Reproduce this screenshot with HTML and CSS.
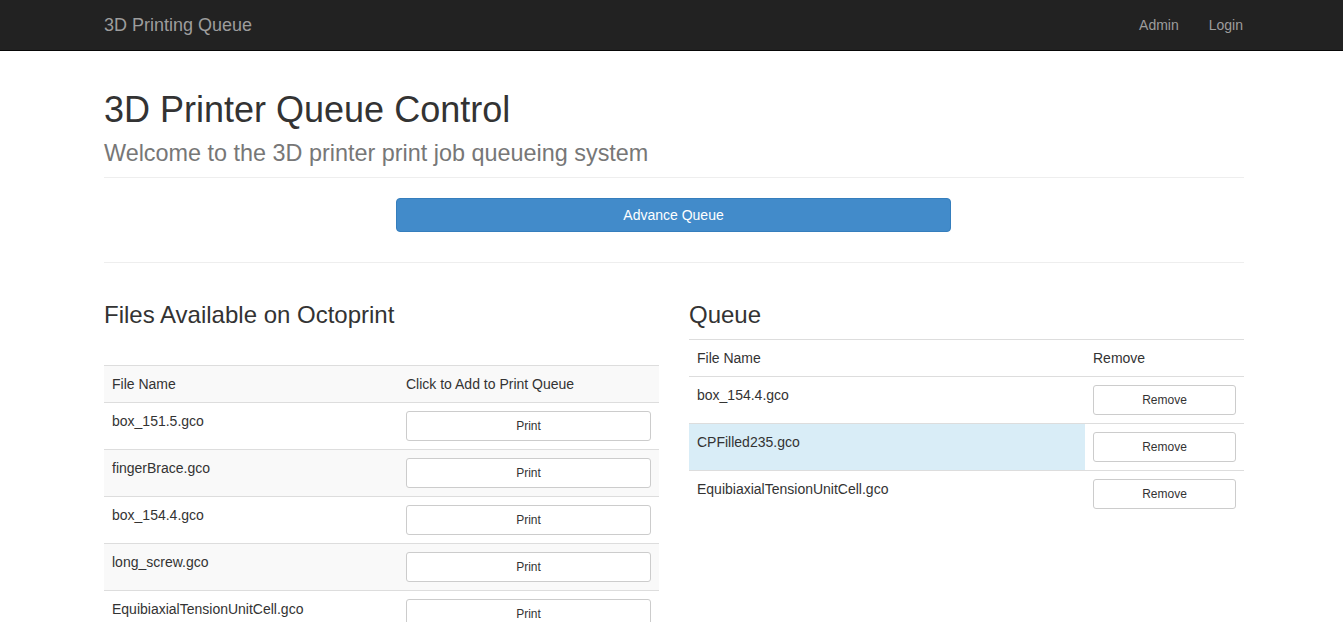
FILE: index.html
```
<!DOCTYPE html>
<html lang="en">
<head>
<meta charset="utf-8">
<title>3D Printing Queue</title>
<link rel="stylesheet" href="styles.css">
</head>
<body>
<nav class="navbar">
  <div class="container nav-inner">
    <a class="brand" href="#">3D Printing Queue</a>
    <ul class="nav-links">
      <li><a href="#">Admin</a></li>
      <li><a href="#">Login</a></li>
    </ul>
  </div>
</nav>
<main class="container">
  <header class="page-header">
    <h1>3D Printer Queue Control<small>Welcome to the 3D printer print job queueing system</small></h1>
  </header>
  <div class="advance-wrap">
    <button class="btn btn-primary">Advance Queue</button>
  </div>
  <hr class="divider">
  <div class="row">
    <section class="col">
      <h3>Files Available on Octoprint</h3>
      <table class="table striped files">
        <tr><td>File Name</td><td class="act">Click to Add to Print Queue</td></tr>
        <tr><td>box_151.5.gco</td><td class="act"><button class="btn btn-sm">Print</button></td></tr>
        <tr><td>fingerBrace.gco</td><td class="act"><button class="btn btn-sm">Print</button></td></tr>
        <tr><td>box_154.4.gco</td><td class="act"><button class="btn btn-sm">Print</button></td></tr>
        <tr><td>long_screw.gco</td><td class="act"><button class="btn btn-sm">Print</button></td></tr>
        <tr><td>EquibiaxialTensionUnitCell.gco</td><td class="act"><button class="btn btn-sm">Print</button></td></tr>
      </table>
    </section>
    <section class="col">
      <h3>Queue</h3>
      <table class="table queue">
        <tr><td>File Name</td><td class="act">Remove</td></tr>
        <tr><td>box_154.4.gco</td><td class="act"><button class="btn btn-sm">Remove</button></td></tr>
        <tr><td class="info">CPFilled235.gco</td><td class="act"><button class="btn btn-sm">Remove</button></td></tr>
        <tr><td>EquibiaxialTensionUnitCell.gco</td><td class="act"><button class="btn btn-sm">Remove</button></td></tr>
      </table>
    </section>
  </div>
</main>
</body>
</html>
```
FILE: styles.css
```
* { box-sizing: border-box; }
html, body { margin: 0; padding: 0; }
body {
  font-family: "Liberation Sans", Arial, Helvetica, sans-serif;
  font-size: 14px;
  line-height: 1.42857;
  color: #333;
  background: #fff;
}
.container {
  width: 1145px;
  padding-left: 5px;
  margin: 0 auto;
}
.navbar {
  background: #222;
  border-bottom: 1px solid #080808;
  height: 51px;
}
.nav-inner {
  display: flex;
  justify-content: space-between;
  align-items: flex-start;
}
.brand {
  display: block;
  font-size: 18px;
  line-height: 20px;
  padding: 15px 0;
  color: #9d9d9d;
  text-decoration: none;
}
.nav-links {
  list-style: none;
  margin: 0 -14px 0 0;
  padding: 0;
  display: flex;
}
.nav-links a {
  display: block;
  padding: 15px;
  line-height: 20px;
  color: #9d9d9d;
  text-decoration: none;
}
.page-header {
  padding-top: 39px;
  padding-bottom: 4px;
  border-bottom: 1px solid #eee;
}
.page-header h1 {
  margin: 0;
  font-size: 36px;
  font-weight: 500;
  line-height: 39.6px;
}
.page-header h1 small {
  display: block;
  margin-top: 4px;
  font-size: 23.4px;
  color: #777;
  line-height: 39.6px;
}
.advance-wrap {
  padding-top: 20px;
  padding-left: 292px;
  display: flex;
}
.btn {
  font-family: inherit;
  cursor: pointer;
  background: #fff;
  border: 1px solid #ccc;
  color: #333;
  text-align: center;
}
.btn-primary {
  width: 555px;
  height: 34px;
  padding: 6px 12px;
  font-size: 14px;
  line-height: 20px;
  background: #428bca;
  border-color: #357ebd;
  color: #fff;
  border-radius: 4px;
}
.btn-sm {
  display: block;
  width: 100%;
  height: 30px;
  padding: 5px 10px;
  font-size: 12px;
  line-height: 18px;
  border-radius: 3px;
}
.divider {
  margin: 30px 0 20px;
  border: 0;
  border-top: 1px solid #eee;
  height: 0;
}
.row {
  display: flex;
  gap: 30px;
}
.col {
  flex: 1 1 0;
  min-width: 0;
}
h3 {
  font-size: 24px;
  font-weight: 500;
  line-height: 26.4px;
  margin: 19px 0 10px;
}
.table {
  width: 100%;
  border-collapse: collapse;
  border-spacing: 0;
  margin-bottom: 20px;
}
.table td {
  padding: 8px;
  line-height: 20px;
  vertical-align: top;
  border-top: 1px solid #ddd;
  text-align: left;
}
.striped tr:nth-child(odd) td { background: #f9f9f9; }
.files { margin-top: 36px; }
.files .act { width: 261px; }
.queue .act { width: 159px; }
.table td.info { background: #d9edf7; }
```
